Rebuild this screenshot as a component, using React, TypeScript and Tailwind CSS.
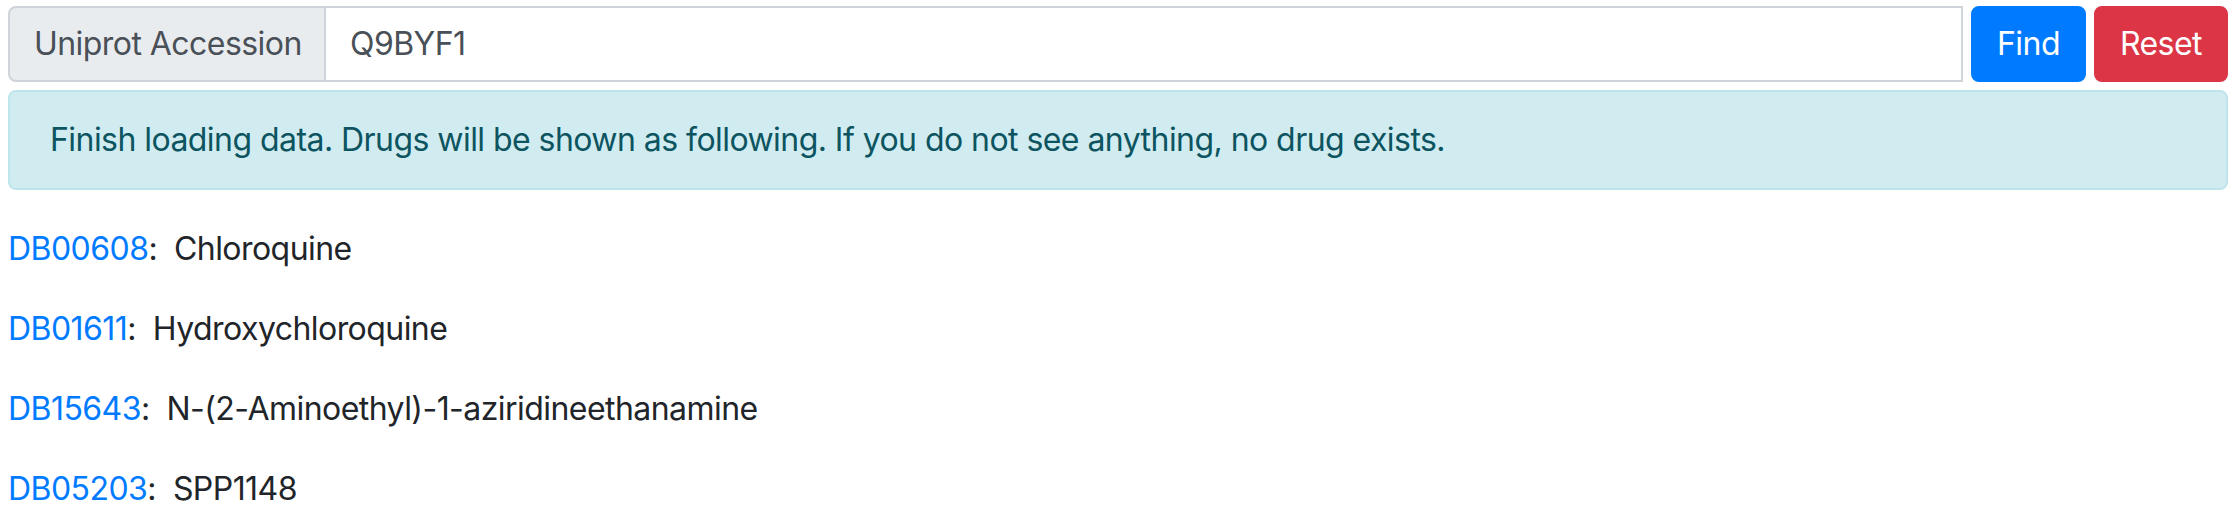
import React from "react"

const drugs = [
  { id: "DB00608", name: "Chloroquine" },
  { id: "DB01611", name: "Hydroxychloroquine" },
  { id: "DB15643", name: "N-(2-Aminoethyl)-1-aziridineethanamine" },
  { id: "DB05203", name: "SPP1148" },
]

export default function App() {
  return (
    <div
      className="min-h-screen bg-white px-2 pt-[6px] text-[32px] leading-[48px] tracking-[-0.55px] text-[#212529]"
      style={{ fontFamily: "Inter, 'Liberation Sans', sans-serif" }}
    >
      {/* search bar */}
      <div className="flex items-stretch">
        <div className="flex flex-1">
          <span className="flex w-[318px] shrink-0 items-center rounded-l-[8px] border-2 border-[#ced4da] bg-[#e9ecef] px-6 py-3 whitespace-nowrap text-[#495057]">
            Uniprot Accession
          </span>
          <div className="flex h-[76px] flex-1 items-center border-2 border-l-0 border-[#ced4da] bg-white pl-6 pr-6">
            <input
              className="w-full bg-transparent tracking-[-0.55px] text-[#495057] outline-none"
              defaultValue="Q9BYF1"
            />
          </div>
        </div>
        <button className="ml-2 h-[76px] rounded-[8px] border-2 border-[#007bff] bg-[#007bff] px-6 text-white">
          Find
        </button>
        <button className="ml-2 h-[76px] rounded-[8px] border-2 border-[#dc3545] bg-[#dc3545] px-6 text-white">
          Reset
        </button>
      </div>

      {/* status */}
      <div className="mt-2 mb-[35px] rounded-[8px] border-2 border-[#bee5eb] bg-[#d1ecf1] px-10 py-6 text-[#0c5460]">
        Finish loading data. Drugs will be shown as following. If you do not see anything, no drug exists.
      </div>

      {/* results */}
      {drugs.map((d) => (
        <p key={d.id} className="mb-8">
          <a href="#" className="text-[#007bff]">
            {d.id}
          </a>
          :&nbsp;&nbsp;{d.name}
        </p>
      ))}
    </div>
  )
}
